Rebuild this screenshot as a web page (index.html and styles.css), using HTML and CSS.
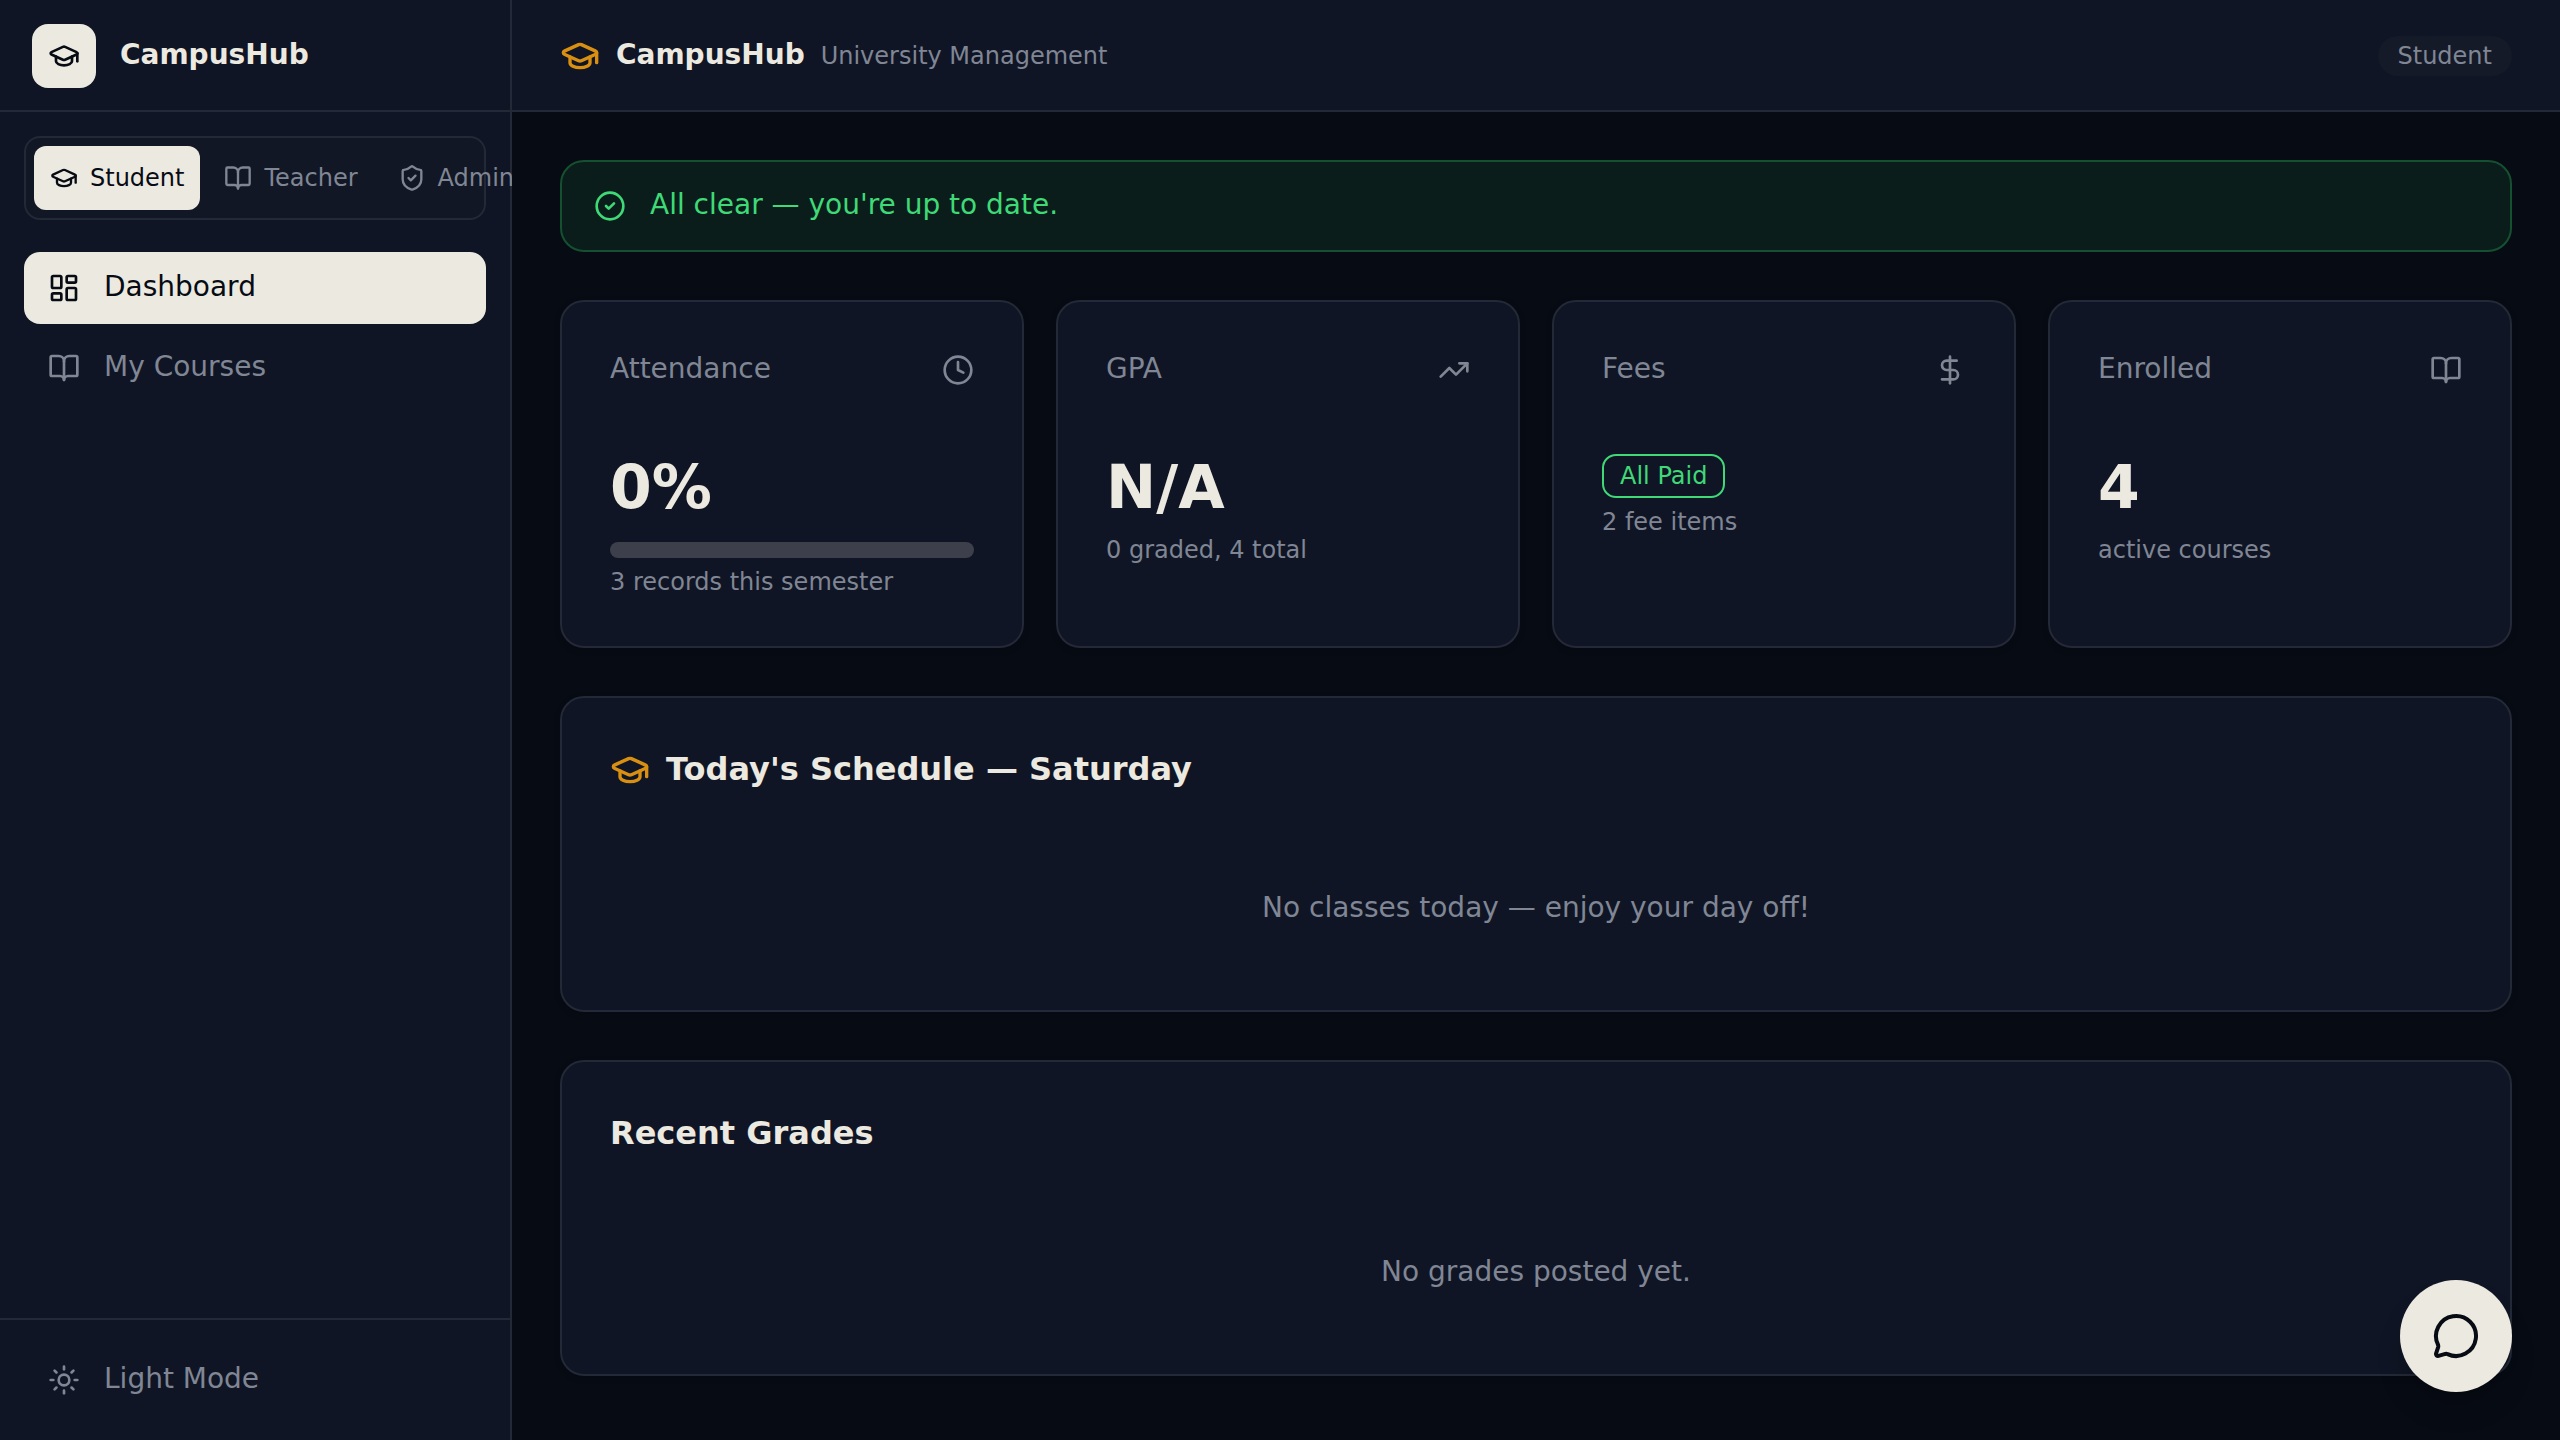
FILE: index.html
```html
<!DOCTYPE html>
<html lang="en">
<head>
<meta charset="utf-8">
<title>CampusHub</title>
<meta name="viewport" content="width=device-width, initial-scale=1">
<link rel="stylesheet" href="styles.css">
</head>
<body>
<svg class="sprite" aria-hidden="true">
  <symbol id="cap" viewBox="0 0 24 24"><path d="M21.42 10.922a1 1 0 0 0-.019-1.838L12.83 5.18a2 2 0 0 0-1.66 0L2.6 9.08a1 1 0 0 0 0 1.832l8.57 3.908a2 2 0 0 0 1.66 0z"/><path d="M22 10v6"/><path d="M6 12.5V16a6 3 0 0 0 12 0v-3.5"/></symbol>
  <symbol id="book" viewBox="0 0 24 24"><path d="M12 7v14"/><path d="M3 18a1 1 0 0 1-1-1V4a1 1 0 0 1 1-1h5a4 4 0 0 1 4 4 4 4 0 0 1 4-4h5a1 1 0 0 1 1 1v13a1 1 0 0 1-1 1h-6a3 3 0 0 0-3 3 3 3 0 0 0-3-3z"/></symbol>
  <symbol id="shield" viewBox="0 0 24 24"><path d="M20 13c0 5-3.5 7.5-7.66 8.95a1 1 0 0 1-.67-.01C7.5 20.5 4 18 4 13V6a1 1 0 0 1 1-1c2 0 4.5-1.2 6.24-2.72a1.17 1.17 0 0 1 1.52 0C14.51 3.81 17 5 19 5a1 1 0 0 1 1 1z"/><path d="m9 12 2 2 4-4"/></symbol>
  <symbol id="grid" viewBox="0 0 24 24"><rect width="7" height="9" x="3" y="3" rx="1"/><rect width="7" height="5" x="14" y="3" rx="1"/><rect width="7" height="9" x="14" y="12" rx="1"/><rect width="7" height="5" x="3" y="16" rx="1"/></symbol>
  <symbol id="sun" viewBox="0 0 24 24"><circle cx="12" cy="12" r="4"/><path d="M12 2v2"/><path d="M12 20v2"/><path d="m4.93 4.93 1.41 1.41"/><path d="m17.66 17.66 1.41 1.41"/><path d="M2 12h2"/><path d="M20 12h2"/><path d="m6.34 17.66-1.41 1.41"/><path d="m19.07 4.93-1.41 1.41"/></symbol>
  <symbol id="check" viewBox="0 0 24 24"><circle cx="12" cy="12" r="10"/><path d="m9 12 2 2 4-4"/></symbol>
  <symbol id="clock" viewBox="0 0 24 24"><circle cx="12" cy="12" r="10"/><path d="M12 6v6l4 2"/></symbol>
  <symbol id="trend" viewBox="0 0 24 24"><path d="M16 7h6v6"/><path d="m22 7-8.5 8.5-5-5L2 17"/></symbol>
  <symbol id="dollar" viewBox="0 0 24 24"><path d="M12 2v20"/><path d="M17 5H9.500a3.500 3.500 0 0 0 0 7h5a3.500 3.500 0 0 1 0 7H6"/></symbol>
  <symbol id="chat" viewBox="0 0 24 24"><path d="M2.992 16.342a2 2 0 0 1 .094 1.167l-1.065 3.290a1 1 0 0 0 1.236 1.168l3.413-.998a2 2 0 0 1 1.099.092 10 10 0 1 0-4.777-4.719"/></symbol>
</svg>

<div class="app">
  <aside class="sidebar">
    <div class="brand">
      <span class="brand-mark"><svg class="icon"><use href="#cap"/></svg></span>
      <span class="brand-name label">CampusHub</span>
    </div>
    <div class="sidebar-body">
      <div class="roles" role="group" aria-label="Role">
        <button class="role role-active" type="button"><svg class="icon icon-sm"><use href="#cap"/></svg>Student</button>
        <button class="role" type="button"><svg class="icon icon-sm"><use href="#book"/></svg>Teacher</button>
        <button class="role" type="button"><svg class="icon icon-sm"><use href="#shield"/></svg>Admin</button>
      </div>
      <nav class="nav" aria-label="Main">
        <a class="nav-item nav-item-active" href="#dashboard"><svg class="icon"><use href="#grid"/></svg><span class="label">Dashboard</span></a>
        <a class="nav-item" href="#courses"><svg class="icon"><use href="#book"/></svg><span class="label">My Courses</span></a>
      </nav>
    </div>
    <div class="sidebar-footer">
      <button class="nav-item" type="button"><svg class="icon"><use href="#sun"/></svg><span class="label">Light Mode</span></button>
    </div>
  </aside>

  <div class="page">
    <header class="topbar">
      <svg class="icon icon-lg accent"><use href="#cap"/></svg>
      <span class="brand-name label">CampusHub</span>
      <span class="tagline">University Management</span>
      <span class="role-badge">Student</span>
    </header>

    <main class="content">
      <div class="notice" role="status">
        <svg class="icon"><use href="#check"/></svg>
        <span class="label">All clear — you're up to date.</span>
      </div>

      <section class="stats" aria-label="Overview">
        <article class="card">
          <div class="stat-head"><h2 class="stat-title label">Attendance</h2><svg class="icon"><use href="#clock"/></svg></div>
          <p class="stat-value">0%</p>
          <div class="meter" role="progressbar" aria-label="Attendance" aria-valuenow="0" aria-valuemin="0" aria-valuemax="100"></div>
          <p class="caption">3 records this semester</p>
        </article>
        <article class="card">
          <div class="stat-head"><h2 class="stat-title label">GPA</h2><svg class="icon"><use href="#trend"/></svg></div>
          <p class="stat-value">N/A</p>
          <p class="caption">0 graded, 4 total</p>
        </article>
        <article class="card">
          <div class="stat-head"><h2 class="stat-title label">Fees</h2><svg class="icon"><use href="#dollar"/></svg></div>
          <span class="paid">All Paid</span>
          <p class="caption">2 fee items</p>
        </article>
        <article class="card">
          <div class="stat-head"><h2 class="stat-title label">Enrolled</h2><svg class="icon"><use href="#book"/></svg></div>
          <p class="stat-value">4</p>
          <p class="caption">active courses</p>
        </article>
      </section>

      <section class="card">
        <h2 class="panel-title"><svg class="icon icon-lg accent"><use href="#cap"/></svg><span class="panel-text">Today's Schedule — Saturday</span></h2>
        <p class="empty">No classes today — enjoy your day off!</p>
      </section>

      <section class="card">
        <h2 class="panel-title"><span class="panel-text">Recent Grades</span></h2>
        <p class="empty">No grades posted yet.</p>
      </section>
    </main>
  </div>
</div>

<button class="chat" type="button" aria-label="Open chat"><svg class="icon"><use href="#chat"/></svg></button>
</body>
</html>
```
FILE: styles.css
```css
:root {
  --bg: #070b14;
  --surface: #0f1524;
  --line: #232936;
  --cream: #ece9e0;
  --ink: #070b14;
  --muted: #808694;
  --green: #3fd977;
  --amber: #d99012;
}

* { box-sizing: border-box; }

body {
  margin: 0;
  background: var(--bg);
  color: var(--cream);
  font: 28px/40px "DejaVu Sans", sans-serif;
}

h2, p { margin: 0; }

button {
  border: 0;
  background: none;
  font: inherit;
  color: inherit;
  cursor: pointer;
}

.sprite { display: none; }

.icon {
  flex: none;
  width: 32px;
  height: 32px;
  fill: none;
  stroke: currentColor;
  stroke-width: 2;
  stroke-linecap: round;
  stroke-linejoin: round;
}
.icon-sm { width: 28px; height: 28px; }
.icon-lg { width: 40px; height: 40px; }
.accent { color: var(--amber); }

.label {
  line-height: 38px;
  padding-bottom: 2px;
}

.app {
  display: grid;
  grid-template-columns: 512px minmax(0, 1fr);
  min-height: 100vh;
}

/* Sidebar */
.sidebar {
  position: sticky;
  top: 0;
  z-index: 0;
  display: flex;
  flex-direction: column;
  height: 100vh;
  background: var(--surface);
  border-right: 2px solid var(--line);
}

.brand {
  display: flex;
  align-items: center;
  gap: 24px;
  height: 112px;
  padding: 0 32px;
  box-shadow: inset 0 -2px var(--line);
}
.brand-mark {
  display: grid;
  place-items: center;
  width: 64px;
  height: 64px;
  border-radius: 16px;
  background: var(--cream);
  color: var(--ink);
}
.brand-name { font-weight: 700; }

.sidebar-body {
  flex: 1;
  display: flex;
  flex-direction: column;
  gap: 32px;
  padding: 24px;
}

.roles {
  display: flex;
  gap: 8px;
  padding: 8px;
  border: 2px solid var(--line);
  border-radius: 16px;
  background: #111725;
}
.role {
  display: flex;
  align-items: center;
  gap: 12px;
  height: 64px;
  padding: 0 16px;
  border-radius: 12px;
  font-size: 24px;
  line-height: 32px;
  color: var(--muted);
}
.role-active {
  background: var(--cream);
  color: var(--ink);
}

.nav {
  display: flex;
  flex-direction: column;
  gap: 8px;
}
.nav-item {
  display: flex;
  align-items: center;
  gap: 24px;
  width: 100%;
  height: 72px;
  padding: 0 24px;
  border-radius: 16px;
  color: var(--muted);
  text-decoration: none;
}
.nav-item-active {
  background: var(--cream);
  color: var(--ink);
}

.sidebar-footer {
  padding: 24px;
  border-top: 2px solid var(--line);
}

/* Page */
.page {
  position: relative;
  z-index: 1;
  background: var(--bg);
}

.topbar {
  display: flex;
  align-items: center;
  gap: 16px;
  height: 112px;
  padding: 0 48px;
  background: var(--surface);
  box-shadow: inset 0 -2px var(--line);
}
.tagline {
  font-size: 24px;
  line-height: 32px;
  color: var(--muted);
}
.role-badge {
  margin-left: auto;
  padding: 4px 20px;
  border-radius: 20px;
  background: #141a28;
  font-size: 24px;
  line-height: 32px;
  color: var(--muted);
}

.content {
  display: flex;
  flex-direction: column;
  gap: 48px;
  padding: 48px;
}

.notice {
  display: flex;
  align-items: center;
  gap: 24px;
  padding: 24px 32px;
  border: 2px solid #155130;
  border-radius: 24px;
  background: #0a1d1a;
  color: var(--green);
}

.stats {
  display: grid;
  grid-template-columns: repeat(4, minmax(0, 1fr));
  gap: 32px;
}

.card {
  padding: 48px;
  border: 2px solid var(--line);
  border-radius: 24px;
  background: var(--surface);
  box-shadow: 0 2px 6px rgba(0, 0, 0, 0.2);
}

.stat-head {
  display: flex;
  align-items: center;
  justify-content: space-between;
  margin-bottom: 64px;
  color: var(--muted);
}
.stat-title {
  font-size: 28px;
  font-weight: 400;
}
.stat-value {
  padding-bottom: 6px;
  font-size: 60px;
  font-weight: 700;
  line-height: 66px;
}
.meter {
  height: 16px;
  margin-top: 16px;
  border-radius: 8px;
  background: #3d404a;
}
.caption {
  margin-top: 8px;
  font-size: 24px;
  line-height: 32px;
  color: var(--muted);
}
.paid {
  display: block;
  width: fit-content;
  padding: 4px 16px;
  border: 2px solid var(--green);
  border-radius: 14px;
  font-size: 24px;
  line-height: 32px;
  color: var(--green);
}

.panel-title {
  display: flex;
  align-items: center;
  gap: 16px;
  font-size: 32px;
}
.panel-text {
  padding-bottom: 2px;
  line-height: 46px;
}
.empty {
  padding: 94px 0 34px;
  text-align: center;
  color: var(--muted);
}

.chat {
  position: fixed;
  right: 48px;
  bottom: 48px;
  z-index: 2;
  display: grid;
  place-items: center;
  width: 112px;
  height: 112px;
  padding: 0;
  border-radius: 50%;
  background: var(--cream);
  color: var(--ink);
  box-shadow: 0 20px 30px -6px rgba(0, 0, 0, 0.2), 0 8px 12px -8px rgba(0, 0, 0, 0.2);
}
.chat .icon { width: 48px; height: 48px; }
```
